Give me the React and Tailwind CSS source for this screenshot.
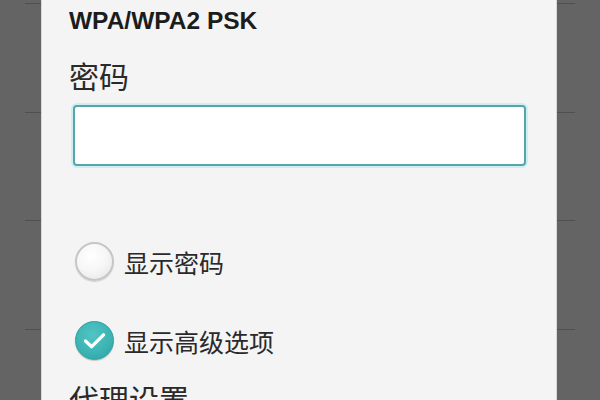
export default function App() {
  const Gutter = ({ side }) => (
    <div className={`flex flex-col pt-[3px] ${side === 'left' ? 'w-[41px] pl-[25px]' : 'w-[43px] pr-[25px]'}`}>
      {[0, 1, 2, 3].map((i) => (
        <div key={i} className="h-[108.5px] shrink-0 border-t border-[#505050]" />
      ))}
    </div>
  );
  return (
    <div className="flex h-[400px] w-[600px] overflow-hidden bg-[#646464] font-['Noto_Sans_CJK_SC',sans-serif] text-[#222]">
      <Gutter side="left" />
      <div className="flex w-[516px] shrink-0 flex-col overflow-hidden border-x border-[#d8d8d8] bg-[#f4f4f4] pl-[27px] pr-[30px]">
        <div className="mt-[7px] shrink-0 font-['Liberation_Sans','Noto_Sans_CJK_SC',sans-serif] text-[24.5px] font-bold leading-[28px] text-[#1c1c1c]">
          WPA/WPA2 PSK
        </div>
        <div className="mt-[22px] shrink-0 text-[30px] leading-[36px] text-[#2a2a2a]">密码</div>
        <div className="ml-[4px] mt-[12px] h-[61px] w-[453px] shrink-0 rounded-[4px] border-2 border-[#5aa3ad] bg-white shadow-[0_0_0_2px_#cdeff3]" />
        <div className="ml-[6px] mt-[76px] flex shrink-0 items-center gap-[10px]">
          <div className="h-[39px] w-[39px] shrink-0 rounded-full border-2 border-[#c6c6c6] bg-[radial-gradient(circle_at_40%_35%,#ffffff_0%,#f6f6f6_50%,#e2e2e2_100%)] shadow-[0_1px_1px_rgba(0,0,0,0.15)]" />
          <span className="text-[25px] leading-[32px] text-[#2a2a2a]">显示密码</span>
        </div>
        <div className="ml-[6px] mt-[40px] flex shrink-0 items-center gap-[10px]">
          <div className="flex h-[39px] w-[39px] shrink-0 items-center justify-center rounded-full border border-[#2f9d9d] bg-[radial-gradient(circle_at_45%_35%,#52c4c4_0%,#3bb3b3_60%,#2c9e9e_100%)] shadow-[0_1px_1px_rgba(0,0,0,0.2)]">
            <svg width="39" height="39" viewBox="0 0 39 39">
              <path d="M10 20 L16.5 26 L29 13.5" fill="none" stroke="#fff" strokeWidth="3.5" strokeLinecap="round" strokeLinejoin="round" />
            </svg>
          </div>
          <span className="text-[25px] leading-[32px] text-[#2a2a2a]">显示高级选项</span>
        </div>
        <div className="mt-[20px] shrink-0 text-[30px] leading-[36px] text-[#2a2a2a]">代理设置</div>
      </div>
      <Gutter side="right" />
    </div>
  );
}
